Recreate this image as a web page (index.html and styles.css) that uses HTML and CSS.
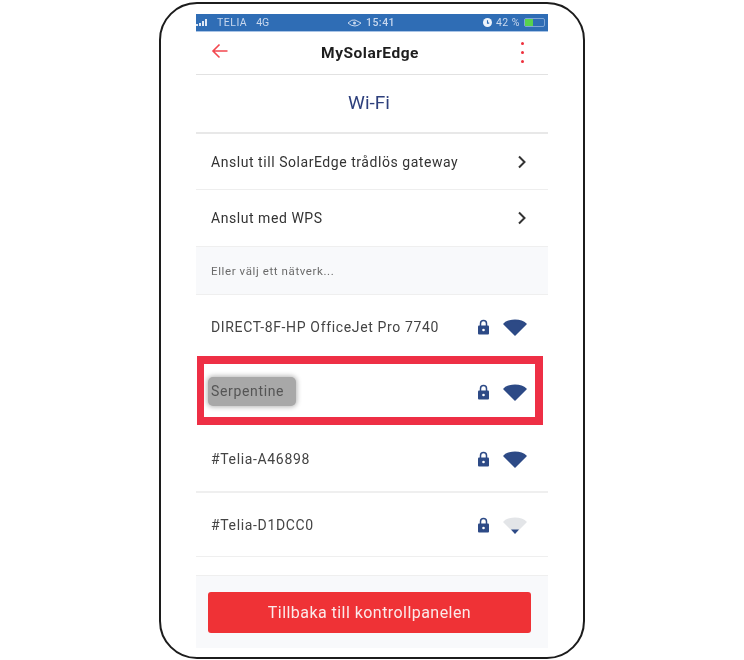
FILE: index.html
```html
<!DOCTYPE html>
<html lang="sv">
<head>
    <meta charset="UTF-8">
    <meta name="viewport" content="width=device-width, initial-scale=1.0">
    <title>MySolarEdge Wi-Fi</title>
    <link rel="stylesheet" href="styles.css">
</head>
<body>
    <div class="phone">
        <div class="screen">
            <div class="status-bar">
                <div class="status-left">
                    <svg class="signal" width="12" height="7" viewBox="0 0 12 7"><path d="M0 5h2v2H0zM3 4h2v3H3zM6 2h2v5H6zM9 0h2v7H9z" fill="#dfe8f5"/></svg>
                    <span class="carrier">TELIA</span><span class="net">4G</span>
                </div>
                <div class="status-mid">
                    <svg width="15" height="8" viewBox="0 0 15 8"><path d="M1 4q4-4 7-3l6 3q-3 3-6 3Q4 7 1 4z" fill="none" stroke="#c9d8ee" stroke-width="1"/><circle cx="7.500" cy="4" r="1.500" fill="#c9d8ee"/></svg>
                    <span class="clock">15:41</span>
                </div>
                <div class="status-right">
                    <svg width="9" height="9" viewBox="0 0 8 8"><circle cx="4" cy="4" r="4" fill="#eef3fa"/><path d="M4 2v2.500h1.500" stroke="#2f6db5" fill="none"/></svg>
                    <span class="percent">42 %</span>
                    <div class="battery"><div class="battery-fill"></div></div>
                </div>
            </div>
            <div class="app-header">
                <svg class="back" width="18" height="16" viewBox="0 0 18 16"><path d="M16.500 8H2M8.500 1.500 2 8l6.500 6.500" fill="none" stroke="#f2474f" stroke-width="1.600"/></svg>
                <span class="app-title">MySolarEdge</span>
                <div class="dots"><i></i><i></i><i></i></div>
            </div>
            <div class="page-title">Wi-Fi</div>
            <div class="link-row">
                <span>Anslut till SolarEdge trådlös gateway</span>
                <svg width="10" height="14" viewBox="0 0 10 14"><path d="M2 1.500 7.500 7 2 12.500" fill="none" stroke="#333" stroke-width="2"/></svg>
            </div>
            <div class="link-row link-row-short">
                <span>Anslut med WPS</span>
                <svg width="10" height="14" viewBox="0 0 10 14"><path d="M2 1.500 7.500 7 2 12.500" fill="none" stroke="#333" stroke-width="2"/></svg>
            </div>
            <div class="section-label">Eller välj ett nätverk...</div>

            <div class="net-row net-row-first">
                <span>DIRECT-8F-HP OfficeJet Pro 7740</span>
                <div class="net-icons">
                    <svg class="lock" width="13" height="16" viewBox="0 0 13 16"><path d="M3.500 7V4.500a3 3 0 0 1 6 0V7" fill="none" stroke="#2d4a86" stroke-width="1.500"/><rect x="1" y="6.500" width="11" height="9" rx="1" fill="#2d4a86"/><circle cx="6.500" cy="11" r="1.300" fill="#fff"/></svg>
                    <svg class="wifi" width="24" height="17" viewBox="0 0 24 17"><path d="M1 5C6 0 18 0 23 5L12 16z" fill="#2d4a86" stroke="#2d4a86" stroke-width="1.500" stroke-linejoin="round"/></svg>
                </div>
            </div>
            <div class="net-row net-row-picked">
                <span class="smudge">Serpentine</span>
                <div class="net-icons">
                    <svg class="lock" width="13" height="16" viewBox="0 0 13 16"><path d="M3.500 7V4.500a3 3 0 0 1 6 0V7" fill="none" stroke="#2d4a86" stroke-width="1.500"/><rect x="1" y="6.500" width="11" height="9" rx="1" fill="#2d4a86"/><circle cx="6.500" cy="11" r="1.300" fill="#fff"/></svg>
                    <svg class="wifi" width="24" height="17" viewBox="0 0 24 17"><path d="M1 5C6 0 18 0 23 5L12 16z" fill="#2d4a86" stroke="#2d4a86" stroke-width="1.500" stroke-linejoin="round"/></svg>
                </div>
                <div class="picked-box"></div>
            </div>
            <div class="net-row">
                <span>#Telia-A46898</span>
                <div class="net-icons">
                    <svg class="lock" width="13" height="16" viewBox="0 0 13 16"><path d="M3.500 7V4.500a3 3 0 0 1 6 0V7" fill="none" stroke="#2d4a86" stroke-width="1.500"/><rect x="1" y="6.500" width="11" height="9" rx="1" fill="#2d4a86"/><circle cx="6.500" cy="11" r="1.300" fill="#fff"/></svg>
                    <svg class="wifi" width="24" height="17" viewBox="0 0 24 17"><path d="M1 5C6 0 18 0 23 5L12 16z" fill="#2d4a86" stroke="#2d4a86" stroke-width="1.500" stroke-linejoin="round"/></svg>
                </div>
            </div>
            <div class="net-row net-row-last">
                <span>#Telia-D1DCC0</span>
                <div class="net-icons">
                    <svg class="lock" width="13" height="16" viewBox="0 0 13 16"><path d="M3.500 7V4.500a3 3 0 0 1 6 0V7" fill="none" stroke="#2d4a86" stroke-width="1.500"/><rect x="1" y="6.500" width="11" height="9" rx="1" fill="#2d4a86"/><circle cx="6.500" cy="11" r="1.300" fill="#fff"/></svg>
                    <svg class="wifi" width="24" height="17" viewBox="0 0 24 17"><path d="M1 5C6 0 18 0 23 5L12 16z" fill="#e3e5e8" stroke="#e3e5e8" stroke-width="1.500" stroke-linejoin="round"/><path d="M8 12.500h8L12 17z" fill="#2d4a86"/></svg>
                </div>
            </div>
            <div class="list-end"></div>
            <div class="footer">
                <button class="back-btn">Tillbaka till kontrollpanelen</button>
            </div>
        </div>
    </div>
</body>
</html>
```

FILE: styles.css
```css
html, body {
    margin: 0;
    height: 660px;
    overflow: hidden;
}
body {
    font-family: Roboto, "Liberation Sans", sans-serif;
    background: white;
    display: flex;
    justify-content: center;
    align-items: flex-start;
}
.phone {
    width: 426px;
    height: 657px;
    margin-top: 2px;
    box-sizing: border-box;
    border: 2.500px solid #1c1c1c;
    border-radius: 38px;
    padding: 10px 0 0 35px;
    background: white;
}
.screen {
    width: 352px;
    filter: blur(0.7px);
}

.status-bar {
    height: 18px;
    background: #2f6db5;
    color: #c9d8ee;
    font-size: 10.500px;
    display: flex;
    align-items: center;
    justify-content: space-between;
    box-sizing: border-box;
    border-bottom: 1px solid #a9c4e6;
}
.status-left, .status-mid, .status-right {
    display: flex;
    align-items: center;
    gap: 4px;
    flex: 1;
}
.status-mid {
    justify-content: center;
    margin-right: 2px;
}
.status-right {
    justify-content: flex-end;
}
.carrier {
    margin-left: 5px;
    letter-spacing: 0.5px;
}
.net {
    margin-left: 5px;
}
.clock {
    font-weight: 500;
    letter-spacing: 0.5px;
}
.percent {
    letter-spacing: 0.5px;
}
.battery {
    width: 19px;
    height: 7px;
    border: 1px solid #7fa6d6;
    border-radius: 2px;
    margin-right: 3px;
}
.battery-fill {
    width: 8px;
    height: 7px;
    background: #58d24e;
}

.app-header {
    height: 42px;
    display: flex;
    align-items: center;
    padding: 0 24px 0 15px;
    border-bottom: 1px solid #e2e2e2;
}
.back {
    margin-top: -4px;
}
.app-title {
    flex: 1;
    text-align: center;
    font-size: 15.500px;
    font-weight: 700;
    letter-spacing: 0.5px;
    color: #1d1d1d;
    padding-right: 10px;
}
.dots {
    display: flex;
    flex-direction: column;
    gap: 6px;
    margin-top: -2px;
}
.dots i {
    display: block;
    width: 3px;
    height: 3px;
    border-radius: 50%;
    background: #ee2f3c;
}
.page-title {
    height: 59px;
    line-height: 56px;
    text-align: center;
    font-size: 19px;
    color: #2d3f7c;
    padding-right: 6px;
    border-bottom: 2px solid #e8e8e8;
    box-sizing: border-box;
}

.link-row {
    height: 56px;
    display: flex;
    align-items: center;
    justify-content: space-between;
    padding: 0 21px 0 15px;
    font-size: 14px;
    letter-spacing: 0.55px;
    color: #333;
    border-bottom: 1px solid #eeeeee;
    box-sizing: border-box;
}
.link-row-short {
    border-bottom: none;
}
.section-label {
    height: 49px;
    line-height: 49px;
    padding-left: 15px;
    font-size: 11.500px;
    letter-spacing: 0.6px;
    color: #6b6b6b;
    background: #f8f9fb;
    border-top: 1px solid #efefef;
    border-bottom: 1px solid #efefef;
    box-sizing: border-box;
}

.net-row {
    position: relative;
    height: 67px;
    display: flex;
    align-items: center;
    justify-content: space-between;
    padding: 0 21px 0 15px;
    font-size: 14px;
    letter-spacing: 0.65px;
    color: #444;
    border-bottom: 2px solid #efefef;
    box-sizing: border-box;
}
.net-row-first {
    height: 63px;
    border-bottom: none;
}
.net-row-picked {
    height: 68px;
    border-bottom: none;
}
.net-row-last {
    height: 64px;
    border-bottom: 1px solid #efefef;
}
.net-icons {
    display: flex;
    align-items: center;
    gap: 13px;
}
.wifi {
    margin-top: 1px;
}
.smudge {
    position: relative;
    left: -3px;
    padding: 6px 3px 7px;
    margin-top: -2px;
    background: #a8a8a8;
    border-radius: 5px;
    box-shadow: 0 0 5px 1px #b4b4b4;
    color: #555;
    width: 82px;
}
.picked-box {
    position: absolute;
    left: 1px;
    top: -2px;
    width: 346px;
    height: 69px;
    box-sizing: border-box;
    border: 8px solid #ee2f45;
    border-left-width: 7px;
}

.list-end {
    height: 18px;
}
.footer {
    height: 73px;
    padding: 16px 17px 0 12px;
    background: #f8f9fb;
    border-top: 1px solid #efefef;
    box-sizing: border-box;
}
.back-btn {
    display: block;
    width: 100%;
    height: 41px;
    background: #ef3236;
    color: #fbeaea;
    border: none;
    border-radius: 3px;
    font-family: inherit;
    font-size: 16px;
    letter-spacing: 0.45px;
    cursor: pointer;
}
```
